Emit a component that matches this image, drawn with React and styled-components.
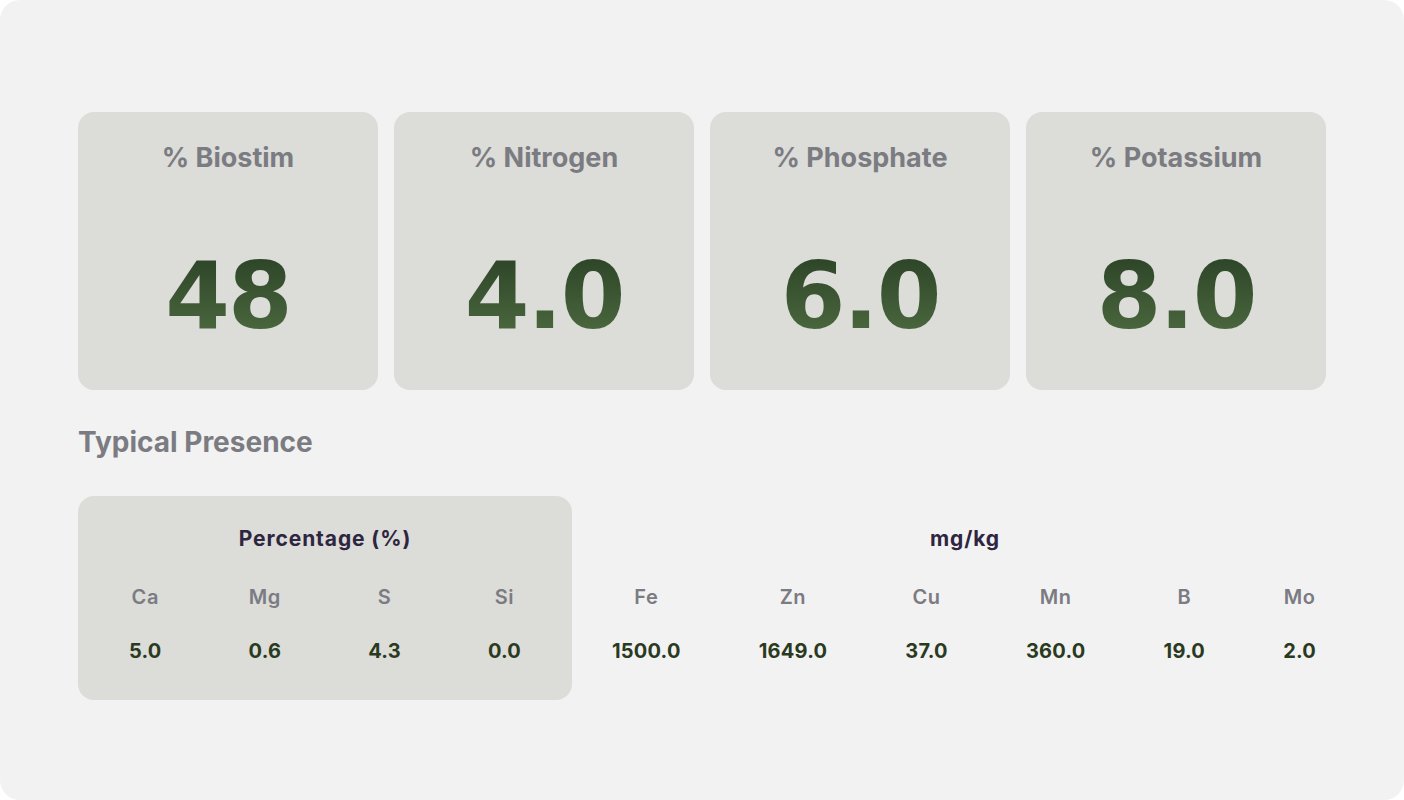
import React from 'react';
import styled, { createGlobalStyle } from 'styled-components';

const GlobalStyle = createGlobalStyle`
  html, body {
    margin: 0;
    padding: 0;
    background: #ffffff;
  }
  * {
    box-sizing: border-box;
  }
`;

const stats = [
  { label: '% Biostim', value: '48' },
  { label: '% Nitrogen', value: '4.0' },
  { label: '% Phosphate', value: '6.0' },
  { label: '% Potassium', value: '8.0' },
];

const percentage = [
  { el: 'Ca', value: '5.0' },
  { el: 'Mg', value: '0.6' },
  { el: 'S', value: '4.3' },
  { el: 'Si', value: '0.0' },
];

const mgkg = [
  { el: 'Fe', value: '1500.0' },
  { el: 'Zn', value: '1649.0' },
  { el: 'Cu', value: '37.0' },
  { el: 'Mn', value: '360.0' },
  { el: 'B', value: '19.0' },
  { el: 'Mo', value: '2.0' },
];

const ElementGroup = ({ title, items, boxed }) => (
  <Group $boxed={boxed}>
    <GroupTitle>{title}</GroupTitle>
    <ElementRow $boxed={boxed}>
      {items.map((item) => (
        <ElementCol key={item.el}>
          <ElementLabel>{item.el}</ElementLabel>
          <ElementValue>{item.value}</ElementValue>
        </ElementCol>
      ))}
    </ElementRow>
  </Group>
);

const App = () => {
  return (
    <>
      <GlobalStyle />
      <Page>
        <StatGrid>
          {stats.map((s) => (
            <StatCard key={s.label}>
              <StatLabel>{s.label}</StatLabel>
              <StatValue>{s.value}</StatValue>
            </StatCard>
          ))}
        </StatGrid>

        <SectionTitle>Typical Presence</SectionTitle>

        <PresenceRow>
          <ElementGroup title="Percentage (%)" items={percentage} boxed />
          <ElementGroup title="mg/kg" items={mgkg} />
        </PresenceRow>
      </Page>
    </>
  );
};

const Page = styled.div`
  width: 1404px;
  height: 800px;
  background: #f2f2f2;
  border-radius: 20px;
  padding: 112px 78px 0;
  font-family: Inter, 'Liberation Sans', sans-serif;
`;

const StatGrid = styled.div`
  display: grid;
  grid-template-columns: repeat(4, 1fr);
  gap: 16px;
`;

const StatCard = styled.div`
  height: 278px;
  background: #dcdcd8;
  border-radius: 16px;
  padding-top: 30px;
  display: flex;
  flex-direction: column;
  align-items: center;
`;

const StatLabel = styled.div`
  font-size: 27px;
  font-weight: 700;
  color: #7b7b82;
  line-height: 32px;
`;

const StatValue = styled.div`
  margin-top: 76px;
  font-family: 'DejaVu Sans', Inter, sans-serif;
  font-size: 93px;
  font-weight: 700;
  line-height: 92px;
  letter-spacing: -2px;
  background: linear-gradient(180deg, #2b4226 0%, #4d6b40 100%);
  -webkit-background-clip: text;
  background-clip: text;
  color: transparent;
`;

const SectionTitle = styled.h2`
  margin: 36px 0 38px;
  font-size: 28px;
  font-weight: 700;
  line-height: 32px;
  color: #7b7b82;
`;

const PresenceRow = styled.div`
  display: flex;
  gap: 32px;
`;

const Group = styled.div`
  flex: ${(p) => (p.$boxed ? '0 0 494px' : '1')};
  height: 204px;
  background: ${(p) => (p.$boxed ? '#dcdcd8' : 'transparent')};
  border-radius: 16px;
  padding-top: 31px;
  display: flex;
  flex-direction: column;
  align-items: stretch;
`;

const GroupTitle = styled.div`
  text-align: center;
  font-size: 21px;
  font-weight: 700;
  line-height: 24px;
  color: #2e2540;
  letter-spacing: 0.9px;
`;

const ElementRow = styled.div`
  margin-top: 34px;
  display: flex;
  justify-content: space-between;
  padding: ${(p) => (p.$boxed ? '0 51px' : '0 10px 0 8px')};
`;

const ElementCol = styled.div`
  display: flex;
  flex-direction: column;
  align-items: center;
  gap: 30px;
`;

const ElementLabel = styled.div`
  font-size: 20px;
  font-weight: 600;
  line-height: 24px;
  color: #7b7b82;
  letter-spacing: 0.6px;
`;

const ElementValue = styled.div`
  font-size: 20px;
  font-weight: 700;
  line-height: 24px;
  color: #2a3a1f;
  letter-spacing: 0.2px;
`;

export default App;
